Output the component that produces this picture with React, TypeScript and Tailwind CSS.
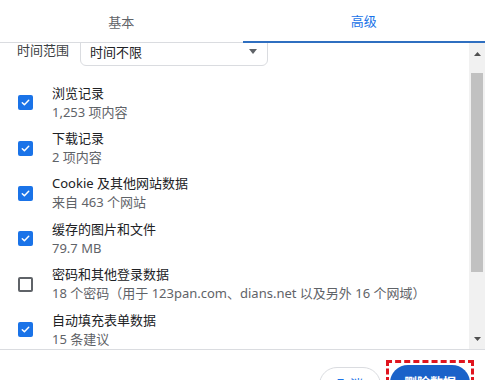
import React from 'react';

interface Item {
  title: string;
  detail: string;
  checked: boolean;
}

const items: Item[] = [
  { title: '浏览记录', detail: '1,253 项内容', checked: true },
  { title: '下载记录', detail: '2 项内容', checked: true },
  { title: 'Cookie 及其他网站数据', detail: '来自 463 个网站', checked: true },
  { title: '缓存的图片和文件', detail: '79.7 MB', checked: true },
  { title: '密码和其他登录数据', detail: '18 个密码（用于 123pan.com、dians.net 以及另外 16 个网域）', checked: false },
  { title: '自动填充表单数据', detail: '15 条建议', checked: true },
];

function CheckBox({ checked }: { checked: boolean }) {
  if (!checked) {
    return <div className="w-[15px] h-[15px] rounded-[2px] border-2 border-[#5f6368] bg-white" />;
  }
  return (
    <div className="w-[15px] h-[15px] rounded-[2px] bg-[#1a73e8] flex items-center justify-center">
      <svg width="11" height="11" viewBox="0 0 12 12" fill="none">
        <path d="M2.5 6.2l2.3 2.3 4.7-4.9" stroke="white" strokeWidth="1.6" strokeLinecap="round" strokeLinejoin="round" />
      </svg>
    </div>
  );
}

export default function App() {
  return (
    <div
      className="w-[485px] h-[380px] bg-white flex flex-col overflow-hidden text-[13px] text-[#202124]"
      style={{ fontFamily: '"Noto Sans", "Noto Sans CJK SC", sans-serif' }}
    >
      {/* Tabs */}
      <div className="relative z-10 flex h-[43px] bg-white border-b border-[#dadce0] shrink-0">
        <div className="flex-1 flex items-center justify-center text-[#5f6368] pt-[3px]">基本</div>
        <div className="flex-1 flex items-center justify-center text-[#1a73e8] pt-[3px] border-b-2 border-[#2f6fc0] mb-[-1px]">
          高级
        </div>
      </div>

      {/* Scroll area */}
      <div className="flex h-[306px] shrink-0">
        <div className="flex-1 overflow-hidden">
          <div className="mt-[-13px]">
            <div className="flex items-center pl-[17px] h-[36px]">
              <span className="w-[63px] text-[#3c4043] pt-[5px]">时间范围</span>
              <div className="w-[188px] h-[36px] border border-[#dadce0] rounded-[6px] flex items-center justify-between pl-[9px] pr-[10px] pt-[9px] text-[#202124]">
                <span>时间不限</span>
                <svg width="8" height="5" viewBox="0 0 8 5" className="mb-[3px]">
                  <path d="M0 0h8L4 5z" fill="#5f6368" />
                </svg>
              </div>
            </div>
            <div className="mt-[14px]">
              {items.map((item) => (
                <div key={item.title} className="flex items-center h-[45.4px]">
                  <div className="w-[52px] pl-[18px] flex">
                    <CheckBox checked={item.checked} />
                  </div>
                  <div className="flex flex-col leading-[19px] whitespace-nowrap">
                    <span className="text-[#202124]">{item.title}</span>
                    <span className="text-[#5f6368]">{item.detail}</span>
                  </div>
                </div>
              ))}
            </div>
          </div>
        </div>

        {/* Scrollbar */}
        <div className="w-[16px] bg-[#f1f1f1] flex flex-col items-center">
          <div className="h-[17px] flex items-center justify-center mt-[2px]">
            <svg width="7" height="4" viewBox="0 0 7 4">
              <path d="M0 4h7L3.5 0z" fill="#505050" />
            </svg>
          </div>
          <div className="mt-[11px] w-[12px] h-[199px] bg-[#c1c1c1]" />
          <div className="flex-1" />
          <div className="h-[17px] flex items-center justify-center mb-[2px]">
            <svg width="7" height="4" viewBox="0 0 7 4">
              <path d="M0 0h7L3.5 4z" fill="#505050" />
            </svg>
          </div>
        </div>
      </div>

      {/* Footer */}
      <div className="flex-1 border-t border-[#dadce0] flex justify-end items-start pr-[11px] pt-[10px]">
        <button className="mt-[7px] w-[62px] h-[36px] rounded-full border border-[#dadce0] text-[#1a73e8] bg-white">
          取消
        </button>
        <div className="ml-[5px] border-[3px] border-dashed border-[#e0141e] p-[1px] pb-0 h-[40px]">
          <button className="mt-[1px] w-[80px] h-[36px] rounded-full bg-[#1a62c9] text-white font-bold">
            删除数据
          </button>
        </div>
      </div>
    </div>
  );
}
